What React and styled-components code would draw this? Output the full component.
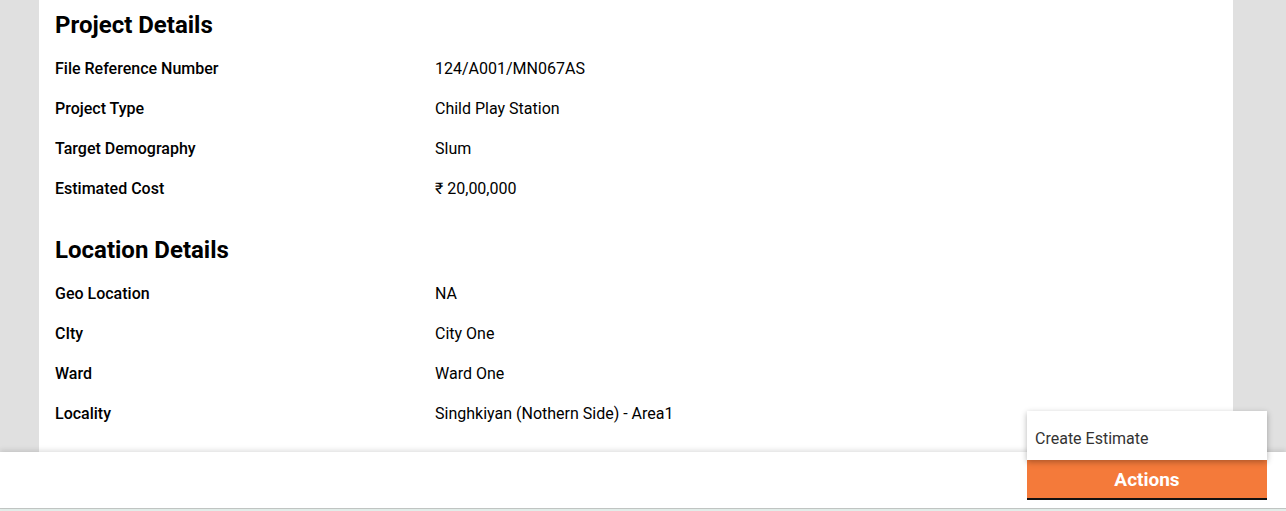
import React from "react"
import styled, {createGlobalStyle} from "styled-components"

const projectRows = [
    ["File Reference Number", "124/A001/MN067AS"],
    ["Project Type", "Child Play Station"],
    ["Target Demography", "Slum"],
    ["Estimated Cost", "₹ 20,00,000"],
]

const locationRows = [
    ["Geo Location", "NA"],
    ["CIty", "City One"],
    ["Ward", "Ward One"],
    ["Locality", "Singhkiyan (Nothern Side) - Area1"],
]

function Section({title, rows}) {
    return (
        <>
            <Heading>{title}</Heading>
            {rows.map(([label, value]) => (
                <Row key={label}>
                    <Label>{label}</Label>
                    <Value>{value}</Value>
                </Row>
            ))}
        </>
    )
}

function App() {
    return (
        <Page>
            <GlobalStyle />
            <Card>
                <Section title="Project Details" rows={projectRows} />
                <Spacer />
                <Section title="Location Details" rows={locationRows} />
            </Card>
            <Footer>
                <ActionWrap>
                    <Menu>
                        <MenuItem>Create Estimate</MenuItem>
                    </Menu>
                    <ActionButton>Actions</ActionButton>
                </ActionWrap>
            </Footer>
            <BottomStrip />
        </Page>
    )
}

const GlobalStyle = createGlobalStyle`
    html, body {
        margin: 0;
        padding: 0;
        background: #e0e0e0;
        font-family: Roboto, "Liberation Sans", sans-serif;
        color: #000;
    }
`

const Page = styled.div`
    width: 1286px;
    height: 511px;
    display: flex;
    flex-direction: column;
    overflow: hidden;
    background: #e0e0e0;
`

const Card = styled.div`
    margin: 0 53px 0 39px;
    height: 452px;
    box-sizing: border-box;
    background: #fff;
    padding: 8px 16px 0;
    flex-shrink: 0;
`

const Heading = styled.h2`
    margin: 0;
    height: 34px;
    line-height: 34px;
    font-size: 24px;
    font-weight: 700;
    margin-bottom: 6px;
`

const Spacer = styled.div`
    height: 25px;
`

const Row = styled.div`
    display: flex;
    height: 40px;
    align-items: center;
    font-size: 16px;
`

const Label = styled.div`
    width: 380px;
    font-weight: 500;
`

const Value = styled.div`
    font-weight: 400;
`

const Footer = styled.div`
    position: relative;
    height: 56px;
    flex-shrink: 0;
    background: #fff;
    box-shadow: 0 -2px 5px rgba(0, 0, 0, 0.12);
    display: flex;
    justify-content: flex-end;
    padding: 8px 19px 0 0;
    box-sizing: border-box;
`

const ActionWrap = styled.div`
    position: relative;
    width: 240px;
`

const Menu = styled.div`
    position: absolute;
    bottom: 100%;
    left: 0;
    right: 0;
    height: 49px;
    background: #fff;
    box-shadow: 0 2px 6px rgba(0, 0, 0, 0.3);
    display: flex;
    align-items: center;
    z-index: 1;
`

const MenuItem = styled.div`
    padding: 5px 8px 0;
    font-size: 16px;
    color: #333;
`

const ActionButton = styled.div`
    height: 40px;
    box-sizing: border-box;
    background: #f47a3a;
    border-bottom: 2px solid #111;
    color: #fff;
    font-weight: 700;
    font-size: 19px;
    display: flex;
    align-items: center;
    justify-content: center;
`

const BottomStrip = styled.div`
    height: 3px;
    border-top: 1px solid #c4c8c6;
    background: #e3eeea;
    flex-shrink: 0;
`

export default App
